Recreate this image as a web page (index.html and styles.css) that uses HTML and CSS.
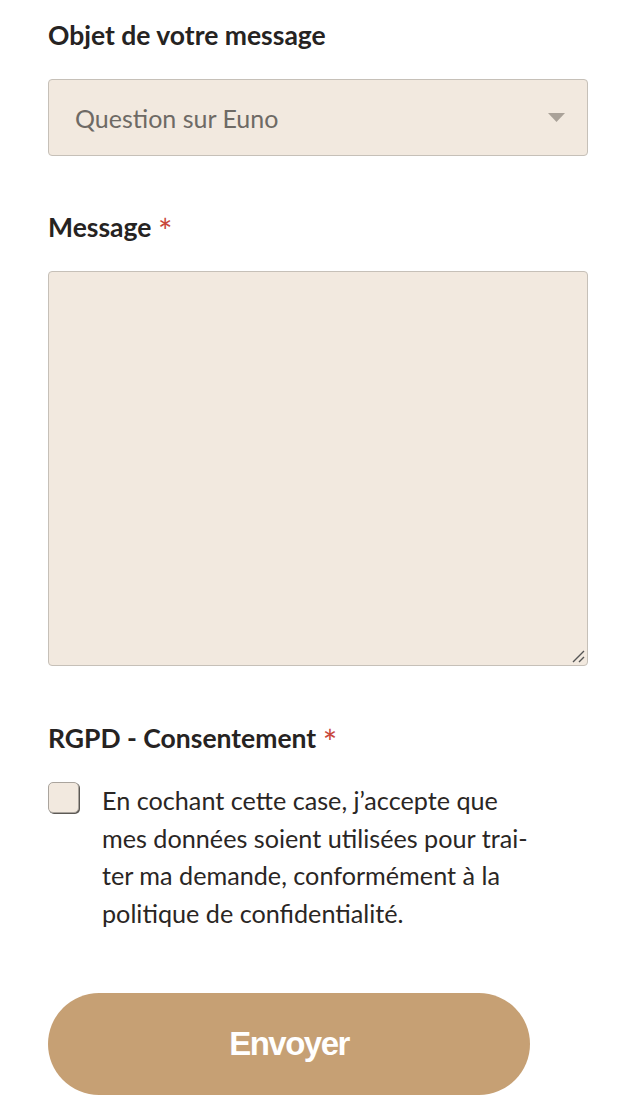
FILE: index.html
```html
<!DOCTYPE html>
<html lang="fr">
<head>
<meta charset="utf-8">
<link rel="stylesheet" href="styles.css">
</head>
<body>
<form class="form">
  <div class="field">
    <label class="label">Objet de votre message</label>
    <div class="select">
      <span class="select-text">Question sur Euno</span>
      <svg class="select-arrow" width="17" height="9" viewBox="0 0 17 9"><path d="M0 0 H17 L8.5 9 Z" fill="#aaa299"/></svg>
    </div>
  </div>
  <div class="field">
    <label class="label">Message <span class="req">*</span></label>
    <div class="textarea">
      <svg class="grip" width="14" height="14" viewBox="0 0 14 14"><path d="M13 2 L2 13 M13 8 L8 13" stroke="#555" stroke-width="1.4" fill="none"/></svg>
    </div>
  </div>
  <div class="field">
    <label class="label">RGPD - Consentement <span class="req">*</span></label>
    <div class="consent">
      <span class="checkbox"></span>
      <p class="consent-text">En cochant cette case, j’accepte que mes données soient utilisées pour trai&shy;ter ma demande, conformément à la politique de confidentialité.</p>
    </div>
  </div>
  <button type="button" class="submit">Envoyer</button>
</form>
</body>
</html>
```
FILE: styles.css
```css
html, body {
  margin: 0;
  padding: 0;
  background: #ffffff;
}
body {
  font-family: "Lato", "Open Sans", sans-serif;
  color: #2a2624;
}
.form {
  padding: 16px 48px 0 48px;
  display: flex;
  flex-direction: column;
}
.field {
  display: flex;
  flex-direction: column;
}
.label {
  font-size: 26.5px;
  font-weight: 700;
  line-height: 38px;
  color: #262322;
  margin-bottom: 25px;
}
.req {
  color: #c8473b;
  font-weight: 400;
  font-size: 34px;
  line-height: 0;
  vertical-align: -7px;
}
.select {
  box-sizing: border-box;
  height: 77px;
  border: 1px solid #c6c0b8;
  border-radius: 4px;
  background: #f2e9df;
  display: flex;
  align-items: center;
  justify-content: space-between;
  padding: 0 22px 0 26px;
  margin-bottom: 52px;
}
.select-text {
  font-size: 25px;
  color: #6e6a65;
}
.textarea {
  height: 395px;
  box-sizing: border-box;
  border: 1px solid #c6c0b8;
  border-radius: 4px;
  background: #f2e9df;
  position: relative;
  margin-bottom: 53px;
}
.grip {
  position: absolute;
  right: 2px;
  bottom: 2px;
}
.consent {
  display: flex;
  gap: 23px;
  align-items: flex-start;
}
.checkbox {
  flex: none;
  width: 31px;
  height: 31px;
  box-sizing: border-box;
  border: 1px solid #aaa49d;
  border-radius: 5px;
  background: #f2e9df;
  box-shadow: 1px 1px 0 #5c5955;
}
.consent-text {
  margin: 0;
  max-width: 438px;
  font-size: 25.2px;
  line-height: 37.5px;
  color: #2a2624;
  hyphens: manual;
}
.submit {
  margin-top: 61px;
  width: 482px;
  height: 102px;
  border: none;
  border-radius: 51px;
  background: #c6a074;
  color: #ffffff;
  font-family: "Liberation Sans", Arial, sans-serif;
  font-weight: 700;
  font-size: 33px;
  letter-spacing: -1.5px;
  cursor: pointer;
}
```
